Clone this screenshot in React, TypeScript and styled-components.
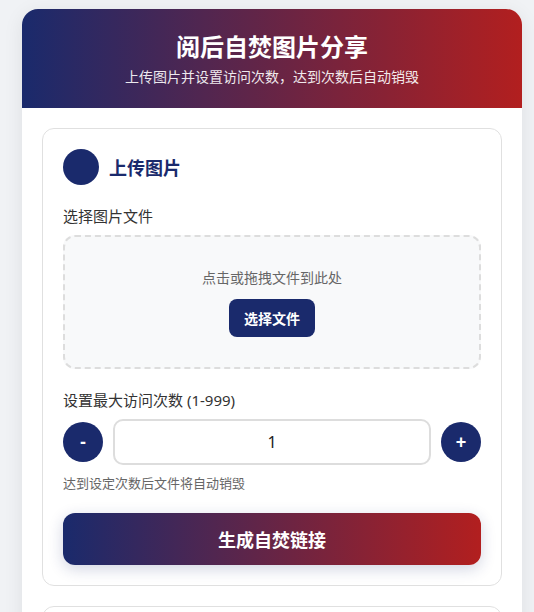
import React, { useState } from 'react';
import styled, { createGlobalStyle } from 'styled-components';

const GlobalStyle = createGlobalStyle`
  * {
    box-sizing: border-box;
  }
  body {
    margin: 0;
    padding: 9px 12px 20px 22px;
    background: #f0f2f5;
    font-family: "Noto Sans", "Noto Sans CJK SC", sans-serif;
    color: #333;
  }
`;

const App = () => {
  const [count, setCount] = useState(1);

  const changeCount = (delta: number) => {
    setCount(c => Math.min(999, Math.max(1, c + delta)));
  };

  return (
    <>
      <GlobalStyle />
      <Container>
        <Header>
          <Title>阅后自焚图片分享</Title>
          <Subtitle>上传图片并设置访问次数，达到次数后自动销毁</Subtitle>
        </Header>
        <Body>
          <Card>
            <CardHeader>
              <StepDot />
              <CardTitle>上传图片</CardTitle>
            </CardHeader>

            <FormGroup>
              <Label>选择图片文件</Label>
              <DropZone>
                <DropText>点击或拖拽文件到此处</DropText>
                <PickButton type="button">选择文件</PickButton>
              </DropZone>
            </FormGroup>

            <FormGroup>
              <Label>设置最大访问次数 (1-999)</Label>
              <CounterRow>
                <RoundButton type="button" onClick={() => changeCount(-1)}>-</RoundButton>
                <CountInput
                  type="number"
                  value={count}
                  onChange={e => setCount(Number(e.target.value) || 1)}
                />
                <RoundButton type="button" onClick={() => changeCount(1)}>+</RoundButton>
              </CounterRow>
              <Hint>达到设定次数后文件将自动销毁</Hint>
            </FormGroup>

            <GenerateButton type="button">生成自焚链接</GenerateButton>
          </Card>

          <Card>
            <CardHeader>
              <StepDot />
              <CardTitle>分享链接</CardTitle>
            </CardHeader>
          </Card>
        </Body>
      </Container>
    </>
  );
};

export default App;

const Container = styled.div`
  width: 500px;
  background: #fff;
  border-radius: 16px;
  overflow: hidden;
  box-shadow: 0 4px 20px rgba(0, 0, 0, 0.08);
`;

const Header = styled.header`
  background: linear-gradient(90deg, #1a2a6c, #b21f1f);
  color: #fff;
  text-align: center;
  padding: 22px 20px 21px;
`;

const Title = styled.h1`
  margin: 0 0 4px;
  font-size: 24px;
  line-height: 32px;
  font-weight: 700;
`;

const Subtitle = styled.p`
  margin: 0;
  font-size: 14px;
  line-height: 20px;
  opacity: 0.9;
`;

const Body = styled.div`
  padding: 20px;
  display: flex;
  flex-direction: column;
  gap: 20px;
`;

const Card = styled.section`
  border: 1px solid #e0e0e0;
  border-radius: 12px;
  padding: 20px;
  background: #fff;
`;

const CardHeader = styled.div`
  display: flex;
  align-items: center;
  gap: 10px;
  margin-bottom: 20px;
`;

const StepDot = styled.span`
  width: 36px;
  height: 36px;
  border-radius: 50%;
  background: #1a2a6c;
  flex-shrink: 0;
`;

const CardTitle = styled.h2`
  margin: 0;
  font-size: 18px;
  font-weight: 700;
  color: #1a2a6c;
`;

const FormGroup = styled.div`
  margin-bottom: 20px;
`;

const Label = styled.label`
  display: block;
  font-size: 15px;
  line-height: 22px;
  color: #333;
  margin-bottom: 8px;
`;

const DropZone = styled.div`
  border: 2px dashed #ddd;
  border-radius: 12px;
  background: #f8f9fa;
  padding: 30px 20px;
  display: flex;
  flex-direction: column;
  align-items: center;
  gap: 10px;
`;

const DropText = styled.p`
  margin: 0;
  font-size: 14px;
  line-height: 22px;
  color: #666;
`;

const PickButton = styled.button`
  height: 38px;
  padding: 0 15px;
  border: none;
  border-radius: 8px;
  background: #1a2a6c;
  color: #fff;
  font-family: inherit;
  font-size: 14px;
  font-weight: 600;
  cursor: pointer;
`;

const CounterRow = styled.div`
  display: flex;
  align-items: center;
  gap: 10px;
`;

const RoundButton = styled.button`
  width: 40px;
  height: 40px;
  flex-shrink: 0;
  border: none;
  border-radius: 50%;
  background: #1a2a6c;
  color: #fff;
  font-family: "Liberation Sans", sans-serif;
  font-size: 18px;
  font-weight: 700;
  cursor: pointer;
`;

const CountInput = styled.input`
  flex: 1;
  min-width: 0;
  height: 46px;
  border: 2px solid #ddd;
  border-radius: 10px;
  text-align: center;
  font-family: "Noto Sans", sans-serif;
  font-size: 16px;
  color: #222;
  outline: none;
  -moz-appearance: textfield;
  &::-webkit-outer-spin-button,
  &::-webkit-inner-spin-button {
    -webkit-appearance: none;
    margin: 0;
  }
`;

const Hint = styled.p`
  margin: 8px 0 0;
  font-size: 13px;
  line-height: 20px;
  color: #666;
`;

const GenerateButton = styled.button`
  width: 100%;
  height: 52px;
  border: none;
  border-radius: 12px;
  background: linear-gradient(90deg, #1a2a6c, #b21f1f);
  color: #fff;
  font-family: inherit;
  font-size: 18px;
  font-weight: 700;
  box-shadow: 0 4px 15px rgba(26, 42, 108, 0.2);
  cursor: pointer;
`;
